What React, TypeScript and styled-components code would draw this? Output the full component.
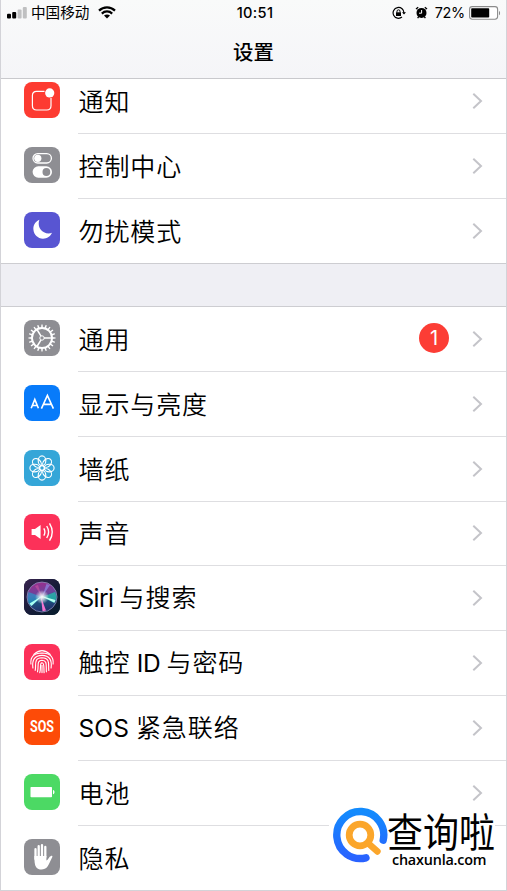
import React from "react";
import styled, { createGlobalStyle } from "styled-components";

const GlobalStyle = createGlobalStyle`
  * { box-sizing: border-box; }
  body { margin: 0; background: #fff; }
`;

const cjk = `"Noto Sans CJK SC", sans-serif`;

const Screen = styled.div`
  position: relative;
  width: 507px;
  height: 891px;
  overflow: hidden;
  display: flex;
  flex-direction: column;
  background: #fff;
  border: 1px solid #d3d3d8;
  border-top: 0;
  font-family: Inter, ${cjk};
  color: #000;
`;

const Header = styled.header`
  flex: none;
  height: 79px;
  border-bottom: 1px solid #c9c9cd;
  background: linear-gradient(#f9fafa, #f5f5f8);
`;

const StatusBar = styled.div`
  display: grid;
  grid-template-columns: 1fr auto 1fr;
  align-items: center;
  height: 25px;
  padding: 0 5px 0 6px;
`;

const Carrier = styled.div`
  display: flex;
  align-items: center;
  font: 400 14.6px/24px ${cjk};
  gap: 4px;
`;

const CarrierName = styled.span`
  display: block;
  margin: -1px 5px 1px 0;
`;

const Clock = styled.div`
  font: 500 14.6px/24px Inter, sans-serif;
  letter-spacing: 0.35px;
  padding-left: 2px;
`;

const StatusRight = styled.div`
  display: flex;
  align-items: center;
  justify-content: flex-end;
`;

const Percent = styled.span`
  font: 400 14.4px/24px Inter, sans-serif;
  letter-spacing: -0.25px;
  margin: 0 4px 0 7px;
`;

const Title = styled.h1`
  margin: 0;
  padding-top: 11px;
  text-align: center;
  font: 500 20.4px/30px ${cjk};
`;

const Group = styled.section<{ $clipped?: boolean }>`
  flex: none;
  display: flex;
  flex-direction: column;
  margin-top: ${(p) => (p.$clipped ? "-10px" : "0")};
`;

const ClipArea = styled.div`
  flex: none;
  overflow: hidden;
  height: 184px;
`;

const Spacer = styled.div`
  flex: none;
  height: 44px;
  background: #efeff4;
  border-top: 1px solid #cdcdd1;
  border-bottom: 1px solid #cdcdd1;
`;

const Row = styled.div`
  display: flex;
  align-items: center;
  height: 64.85px;
  padding-left: 23px;
`;

const Tile = styled.div<{ $bg: string }>`
  flex: none;
  width: 36px;
  height: 36px;
  margin-top: -3px;
  border-radius: 8px;
  overflow: hidden;
  background: ${(p) => p.$bg};
  svg { display: block; }
`;

const RowBody = styled.div<{ $last?: boolean }>`
  flex: 1;
  align-self: stretch;
  display: flex;
  align-items: center;
  margin-left: 18px;
  padding-right: 23px;
  border-bottom: 1px solid ${(p) => (p.$last ? "transparent" : "#dedee1")};
`;

const Label = styled.div`
  flex: 1;
  display: flex;
  align-items: baseline;
  padding: 0 0 2px 0.5px;
  white-space: pre;
  line-height: 36px;
`;

const Han = styled.span`
  font: 350 25px/36px ${cjk};
  letter-spacing: 0.9px;
`;

const Latin = styled.span<{ $track: number }>`
  font: 400 24.5px/36px Inter, sans-serif;
  letter-spacing: ${(p) => p.$track}px;
`;

const Badge = styled.span`
  display: grid;
  place-items: center;
  width: 30px;
  height: 30px;
  margin: -2px 23px 0 0;
  border-radius: 50%;
  background: #fc3d35;
  color: #fff;
  font: 400 20px/30px Inter, sans-serif;
`;

const Watermark = styled.div`
  position: absolute;
  left: 328px;
  top: 806px;
  width: 166px;
  height: 64px;
  display: flex;
  background: #fff;
`;

const WatermarkText = styled.div`
  display: flex;
  flex-direction: column;
  margin-left: -2px;
`;

const BrandName = styled.div`
  font: 400 36px/38px ${cjk};
  height: 45px;
  padding-top: 4px;
  transform: scaleY(1.1);
  white-space: nowrap;
`;

const BrandSite = styled.div`
  padding-left: 5px;
  font: 600 14.4px/18px "Open Sans", sans-serif;
  letter-spacing: -0.2px;
`;

const Signal = () => (
  <svg width="20" height="12" viewBox="0 0 20 12">
    <rect x="0" y="6.8" width="4" height="4.8" rx="1" />
    <rect x="5.2" y="5" width="4" height="6.6" rx="1" />
    <rect x="10.6" y="2.4" width="4" height="9.2" rx="1" fill="#bfc0c1" />
    <rect x="15.8" y="0" width="4" height="11.6" rx="1" fill="#bfc0c1" />
  </svg>
);

const Wifi = () => (
  <svg width="18" height="13" viewBox="0 0 18 13" fill="none" stroke="#000" strokeWidth="2.2">
    <path d="M1 4.6C5.5 .2 12.5 .2 17 4.6" />
    <path d="M3.8 7.6C6.8 4.7 11.2 4.7 14.2 7.6" />
    <path d="M9 12.6L6 9.6C7.7 8.2 10.3 8.2 12 9.6Z" fill="#000" stroke="none" />
  </svg>
);

const RotationLock = () => (
  <svg width="14" height="14" viewBox="0 0 14 14" fill="none" stroke="#000" strokeWidth="1.2">
    <path d="M11.9 7.2A5.4 5.4 0 1 0 10 11" />
    <path d="M10 6.2h4L12 8.6Z" fill="#000" stroke="none" />
    <rect x="4" y="6.3" width="5" height="3.7" fill="#000" stroke="none" />
    <path d="M5 6.5V5.3a1.5 1.5 0 0 1 3 0v1.2" strokeWidth="1" />
  </svg>
);

const Alarm = styled(({ className }: { className?: string }) => (
  <svg className={className} width="13" height="13" viewBox="0 0 13 13">
    <circle cx="6.5" cy="6.9" r="5" />
    <path d="M1 3.1L3.2 1.2M12 3.1L9.8 1.2M2.6 12.2L3.6 10.8M10.4 12.2L9.4 10.8" stroke="#000" strokeWidth="1.3" />
    <path d="M6.6 4V7.2H4" fill="none" stroke="#fff" strokeWidth="1" />
  </svg>
))`
  margin-left: 9px;
`;

const Battery = () => (
  <svg width="32" height="14" viewBox="0 0 32 14">
    <rect x="0.6" y="0.6" width="28" height="12.6" rx="2.6" fill="#fff" stroke="#8b8b8b" strokeWidth="1.1" />
    <rect x="2.2" y="2.2" width="18" height="9.4" rx="0.8" />
    <path d="M30 5v4.2c1.4-.5 1.4-3.7 0-4.2Z" fill="#8b8b8b" />
  </svg>
);

const Chevron = () => (
  <svg width="11" height="18" viewBox="0 0 11 18" fill="none" stroke="#c4c4c9" strokeWidth="2">
    <path d="M1.3 1.8L9 9L1.3 16.2" />
  </svg>
);

const Glyph = ({ children }: { children: React.ReactNode }) => (
  <svg width="36" height="36" viewBox="0 0 36 36" fill="none" stroke="#fff">
    {children}
  </svg>
);

const range = (n: number) => Array.from({ length: n }, (_, i) => i);

const glyphs: Record<string, React.ReactNode> = {
  notify: (
    <Glyph>
      <path d="M20.5 9.4H12.6Q8.4 9.4 8.4 13.6V23.8Q8.4 28 12.6 28H22.8Q27 28 27 23.8V16" strokeWidth="1.2" />
      <circle cx="25.7" cy="10.9" r="4.6" fill="#fff" stroke="none" />
    </Glyph>
  ),
  control: (
    <Glyph>
      <rect x="9" y="6.6" width="18.4" height="9.4" rx="4.7" strokeWidth="1.3" />
      <circle cx="13.8" cy="11.3" r="3.6" fill="#fff" stroke="none" />
      <rect x="8.6" y="19.3" width="19.4" height="11.4" rx="5.7" fill="#fff" stroke="none" />
      <circle cx="22.4" cy="25" r="3.9" fill="#8e8e93" stroke="none" />
    </Glyph>
  ),
  moon: (
    <Glyph>
      <path d="M15.4 7.8C11.3 9.6 9 13.4 9.4 17.6C9.9 22.9 13.8 26.7 19 26.7C23.2 26.7 26.4 24.5 28 20.8C25.7 21.9 22.4 21.7 20 20.3C15.4 17.8 13.6 12.7 15.4 7.8Z" fill="#fff" stroke="none" />
    </Glyph>
  ),
  gear: (
    <Glyph>
      <circle cx="18" cy="18" r="10" strokeWidth="1.9" />
      {range(20).map((i) => (
        <path key={i} d="M17.1 8L17.4 4.4H18.6L18.9 8Z" fill="#fff" stroke="none" transform={`rotate(${i * 18} 18 18)`} />
      ))}
      <circle cx="18" cy="18" r="2.2" strokeWidth="1" />
      <path d="M20 18H28M17 16.2L13 9.5M17 19.8L13 26.5" strokeWidth="1.5" />
    </Glyph>
  ),
  display: (
    <Glyph>
      <path d="M7.2 23.2L10.8 14.4L14.4 23.2M8.5 20.5H13.1" strokeWidth="1.6" />
      <path d="M17.4 23.7L23.4 10.5L29.4 23.7M19.6 19.4H27.2" strokeWidth="1.6" />
    </Glyph>
  ),
  flower: (
    <Glyph>
      {range(8).map((i) => (
        <ellipse key={i} cx="18" cy="10.8" rx="3.8" ry="4.9" strokeWidth="1.15" transform={`rotate(${i * 45} 18 18)`} />
      ))}
      <circle cx="18" cy="18" r="2.3" strokeWidth="1" />
    </Glyph>
  ),
  sound: (
    <Glyph>
      <path d="M7.6 15H11L16.6 11V25L11 21H7.6Z" fill="#fff" stroke="none" />
      <path d="M19.8 14.3Q22 18 19.8 21.7M22.7 12Q26.5 18 22.7 24M25.5 9.3Q31 18 25.5 26.7" strokeWidth="1.4" />
    </Glyph>
  ),
  siri: (
    <Glyph>
      <defs>
        <linearGradient id="siriBack" x1="0" y1="0" x2="1" y2="1">
          <stop offset="0" stopColor="#39234f" />
          <stop offset=".55" stopColor="#151c38" />
          <stop offset="1" stopColor="#071d2b" />
        </linearGradient>
        <linearGradient id="siriOrb" x1=".4" y1="0" x2=".6" y2="1">
          <stop offset="0" stopColor="#9c2d8c" />
          <stop offset=".4" stopColor="#6a459c" />
          <stop offset=".6" stopColor="#1d5580" />
          <stop offset="1" stopColor="#232a68" />
        </linearGradient>
        <radialGradient id="siriGlow">
          <stop offset="0" stopColor="#fff" />
          <stop offset=".3" stopColor="#fff" stopOpacity=".75" />
          <stop offset="1" stopColor="#fff" stopOpacity="0" />
        </radialGradient>
      </defs>
      <rect width="36" height="36" fill="url(#siriBack)" stroke="none" />
      <circle cx="18" cy="18" r="15" fill="url(#siriOrb)" stroke="#8b91bd" strokeWidth=".8" />
      <path d="M18 18L4.5 13Q2 22 7 27Z" fill="#22a4d2" fillOpacity=".6" stroke="none" />
      <path d="M18 18L31 13Q34 19 30 24Z" fill="#27bfae" fillOpacity=".75" stroke="none" />
      <path d="M17 18L22 31.5L18.5 32.3Z" fill="#f374d0" stroke="none" />
      <path d="M18 17L5.5 24.5L7.5 27Z" fill="#a9fff2" stroke="none" />
      <path d="M17 17L31.5 21L30.5 23.8Z" fill="#b8fff1" stroke="none" />
      <path d="M18 18L11 7L14 6Z" fill="#d65ba4" fillOpacity=".5" stroke="none" />
      <path d="M18 18L26 6L22.5 5Z" fill="#8e87e4" fillOpacity=".7" stroke="none" />
      <circle cx="18" cy="18" r="7" fill="url(#siriGlow)" stroke="none" />
    </Glyph>
  ),
  finger: (
    <Glyph>
      <g strokeWidth="1.15" strokeLinecap="round">
        <path d="M9.8 10.4Q18 3 26.2 10.4" />
        <path d="M6.9 20Q5.8 9.2 18 9Q30.2 9.2 29.1 20" />
        <path d="M8.9 24Q7.2 11.5 18 11.4Q28.8 11.5 27.1 24" />
        <path d="M11.2 26.4C12.4 21 9.3 13.9 18 13.8C26.7 13.9 24.1 21 24.8 26.4" />
        <path d="M13.5 27.8C15 22 12.3 16.3 18 16.2C23.7 16.3 21.9 22 22.4 27.8" />
        <path d="M15.8 28.6C17.3 23 15.4 18.8 18 18.7C20.6 18.8 19.6 23 20.1 28.6" />
        <path d="M18 21.5V28.6" />
      </g>
    </Glyph>
  ),
  power: (
    <Glyph>
      <rect x="6.5" y="13" width="21.5" height="10.2" rx=".8" fill="#fff" stroke="none" />
      <path d="M29 16v4.2c2-.3 2-3.9 0-4.2Z" fill="#fff" stroke="none" />
    </Glyph>
  ),
  hand: (
    <Glyph>
      <g strokeWidth="2.3" strokeLinecap="round">
        <path d="M11.5 20V10.2M14.7 18V7.2M18 18V6.2M21.3 18V8" />
      </g>
      <path d="M10.4 17H22.4V21.6C24.2 20.6 25 17.5 27 16.9C28.2 16.6 28.8 17.3 28.2 18.3C26.5 21.4 25.2 25.3 23.2 28C21.2 31 14.5 31.5 12.2 28.2C10.5 25.8 10.4 22 10.4 17Z" fill="#fff" stroke="none" />
    </Glyph>
  ),
};

const SosText = styled.div`
  width: 36px;
  text-align: center;
  color: #fff;
  font: 700 16px/36px Roboto, sans-serif;
  transform: scaleX(0.78);
  letter-spacing: 0.1px;
`;

type Run = string | { text: string; track: number };
type Item = { icon: string; bg: string; label: Run[]; badge?: number };

const alerts: Item[] = [
  { icon: "notify", bg: "#fd3b31", label: ["通知"] },
  { icon: "control", bg: "#8e8e93", label: ["控制中心"] },
  { icon: "moon", bg: "#5855d2", label: ["勿扰模式"] },
];

const general: Item[] = [
  { icon: "gear", bg: "#8e8e93", label: ["通用"], badge: 1 },
  { icon: "display", bg: "#087bfa", label: ["显示与亮度"] },
  { icon: "flower", bg: "#35a6d8", label: ["墙纸"] },
  { icon: "sound", bg: "#fc3159", label: ["声音"] },
  { icon: "siri", bg: "#171b36", label: [{ text: "Siri ", track: -0.6 }, "与搜索"] },
  { icon: "finger", bg: "#fc3159", label: ["触控", { text: " ID ", track: -0.45 }, "与密码"] },
  { icon: "sos", bg: "#fd4b08", label: [{ text: "SOS ", track: 0.1 }, "紧急联络"] },
  { icon: "power", bg: "#4cd964", label: ["电池"] },
  { icon: "hand", bg: "#8e8e93", label: ["隐私"] },
];

const SettingsGroup = ({ items, clipped }: { items: Item[]; clipped?: boolean }) => (
  <Group $clipped={clipped}>
    {items.map((item, i) => (
      <Row key={item.icon}>
        <Tile $bg={item.bg}>{item.icon === "sos" ? <SosText>SOS</SosText> : glyphs[item.icon]}</Tile>
        <RowBody $last={i === items.length - 1}>
          <Label>
            {item.label.map((run, k) =>
              typeof run === "string" ? <Han key={k}>{run}</Han> : <Latin key={k} $track={run.track}>{run.text}</Latin>
            )}
          </Label>
          {item.badge && <Badge>{item.badge}</Badge>}
          <Chevron />
        </RowBody>
      </Row>
    ))}
  </Group>
);

export default function App() {
  return (
    <>
      <GlobalStyle />
      <Screen>
        <Header>
          <StatusBar>
            <Carrier>
              <Signal />
              <CarrierName>中国移动</CarrierName>
              <Wifi />
            </Carrier>
            <Clock>10:51</Clock>
            <StatusRight>
              <RotationLock />
              <Alarm />
              <Percent>72%</Percent>
              <Battery />
            </StatusRight>
          </StatusBar>
          <Title>设置</Title>
        </Header>
        <ClipArea>
          <SettingsGroup items={alerts} clipped />
        </ClipArea>
        <Spacer />
        <SettingsGroup items={general} />
        <Watermark>
          <svg width="60" height="64" viewBox="0 0 60 64" fill="none" strokeLinecap="round">
            <defs>
              <linearGradient id="ring" x1="0" y1="0" x2="0" y2="1">
                <stop offset="0" stopColor="#138bfd" />
                <stop offset="1" stopColor="#2962ff" />
              </linearGradient>
            </defs>
            <path d="M54.2 34.2A23.5 23.5 0 1 0 37 51.8" stroke="url(#ring)" strokeWidth="7.4" />
            <circle cx="31" cy="29" r="10.8" stroke="#fba62b" strokeWidth="6.8" />
            <path d="M40 38L48.5 45.5" stroke="#fba62b" strokeWidth="6.4" />
          </svg>
          <WatermarkText>
            <BrandName>查询啦</BrandName>
            <BrandSite>chaxunla.com</BrandSite>
          </WatermarkText>
        </Watermark>
      </Screen>
    </>
  );
}
